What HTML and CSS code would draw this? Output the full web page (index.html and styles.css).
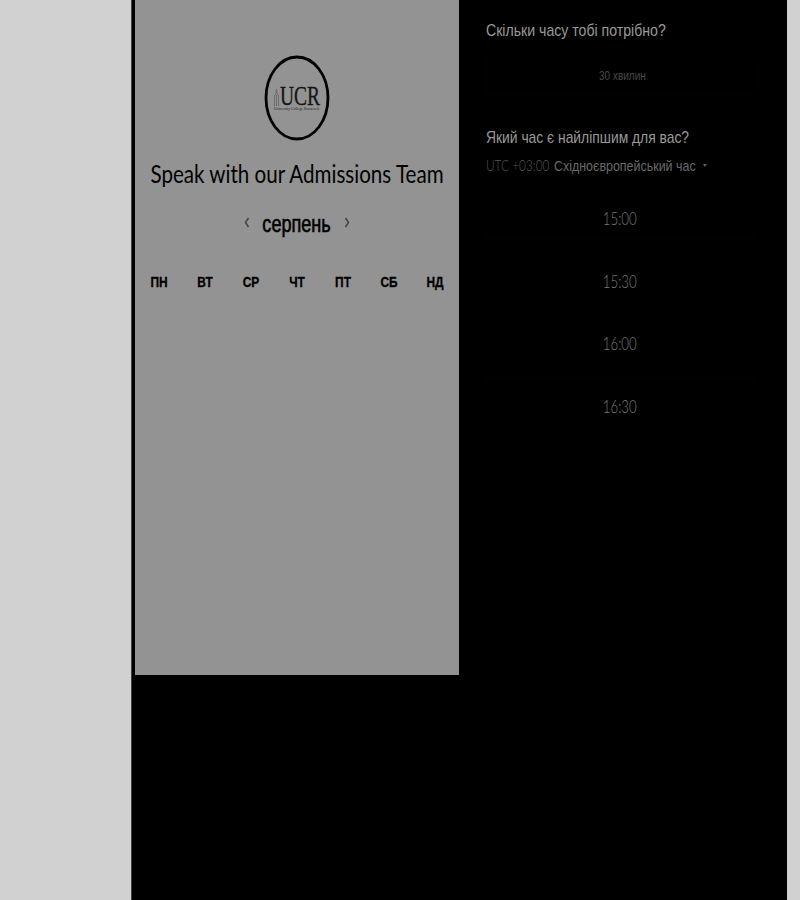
FILE: index.html
```
<!DOCTYPE html>
<html lang="uk">
<head>
<meta charset="utf-8">
<title>Admissions Team</title>
<link rel="stylesheet" href="styles.css">
</head>
<body>
<main class="widget">
  <section class="calendar">
    <svg class="logo" viewBox="0 0 66 86">
      <ellipse cx="33" cy="43" rx="31" ry="41" fill="none" stroke="#000" stroke-width="2.8"/>
      <path d="M10.500 51V41l1.500-3 .5-4 .5 4 1.500 3v10M12.500 40v11" fill="none" stroke="#6c6c6c" stroke-width="1"/>
      <text class="logo-name" x="16" y="49.500" textLength="40" lengthAdjust="spacingAndGlyphs">UCR</text>
      <text class="logo-sub" x="10" y="55" textLength="45" lengthAdjust="spacingAndGlyphs">University College Roosevelt</text>
    </svg>
    <h1><span>Speak with our Admissions Team</span></h1>
    <div class="month">
      <svg class="arrow" viewBox="0 0 6 11"><path d="M4.500 1 1.500 5.500 4.500 10"/></svg>
      <div class="month-name"><span>серпень</span></div>
      <svg class="arrow" viewBox="0 0 6 11"><path d="M1.500 1 4.500 5.500 1.500 10"/></svg>
    </div>
    <div class="weekdays">
      <span>ПН</span><span>ВТ</span><span>СР</span><span>ЧТ</span><span>ПТ</span><span>СБ</span><span>НД</span>
    </div>
  </section>
  <section class="booking">
    <h2 class="q1"><span>Скільки часу тобі потрібно?</span></h2>
    <div class="duration"><span>30 хвилин</span></div>
    <h2 class="q2"><span>Який час є найліпшим для вас?</span></h2>
    <div class="zone"><span class="utc">UTC +03:00</span><span class="zone-name">Східноєвропейський час</span><i class="caret"></i></div>
    <div class="times">
      <div><span>15:00</span></div>
      <div><span>15:30</span></div>
      <div><span>16:00</span></div>
      <div><span>16:30</span></div>
    </div>
  </section>
</main>
</body>
</html>
```
FILE: styles.css
```
* { box-sizing: border-box; }
body { margin: 0; height: 900px; overflow: hidden; background: #d1d1d1; font-family: "Liberation Sans", Arial, sans-serif; }
h1, h2 { margin: 0; font-weight: 400; }
span { display: block; white-space: nowrap; }
.widget { display: flex; align-items: flex-start; width: 656px; height: 900px; margin-left: 131px; padding-left: 3px; background: #000; border-left: 1px solid #444; }
.calendar { width: 324px; height: 675px; padding-top: 55px; background: #939393; color: #000; flex: none; }
.logo { display: block; width: 66px; height: 86px; margin: 0 auto; }
.logo-name { font: 27px "Liberation Serif", serif; fill: #151515; stroke: #151515; stroke-width: .3px; }
.logo-sub { font: 4px "Liberation Serif", serif; fill: #222; }
h1 { display: flex; justify-content: center; height: 34px; margin-top: 15px; font: 25px/34px Lato, sans-serif; }
h1 span { transform: scaleX(.823); }
.month { display: flex; justify-content: center; align-items: center; height: 32px; margin-top: 18px; }
.month-name { display: flex; justify-content: center; width: 94px; font-size: 23px; line-height: 32px; -webkit-text-stroke: .6px #000; }
.month-name span { transform: scaleX(.785); }
.arrow { width: 6px; height: 11px; margin-top: -3px; fill: none; stroke: #444; stroke-width: 1.5; }
.weekdays { display: grid; grid-template-columns: repeat(7, 46.1px); justify-content: center; margin-top: 32px; font: bold 15.5px/20px "Liberation Sans", sans-serif; }
.weekdays span { text-align: center; transform: scaleX(.77); -webkit-text-stroke: .3px #000; }
.booking { width: 328px; padding: 20px 28px 0 27px; color: #9a9a9a; }
h2 { font-size: 17px; line-height: 22px; }
h2 span, .zone span { transform-origin: 0 50%; }
.q1 span { transform: scaleX(.83); }
.q2 { margin-top: 32px; }
.q2 span { transform: scaleX(.815); }
.duration { display: flex; justify-content: center; height: 37px; margin-top: 16px; border: 1px solid #030303; font-size: 13px; line-height: 33px; color: #484848; }
.duration span { transform: scaleX(.77); }
.zone { display: flex; align-items: center; height: 22px; margin-top: 5px; font-size: 15px; color: #6a6a6a; }
.utc { width: 68px; font-family: Lato, sans-serif; font-weight: 300; color: #555; transform: scaleX(.79); }
.zone-name { width: 149px; transform: scaleX(.83); }
.caret { border: 2.5px solid transparent; border-top: 3px solid #5c5c5c; border-bottom: 0; }
.times { margin-top: 12px; }
.times div { display: flex; justify-content: center; height: 52px; margin: 0 5px 10.7px 0; border: 1px solid #020202; font: 300 17px/60px Lato, sans-serif; color: #7c7c7c; }
.times span { transform: scaleX(.78); }
```
